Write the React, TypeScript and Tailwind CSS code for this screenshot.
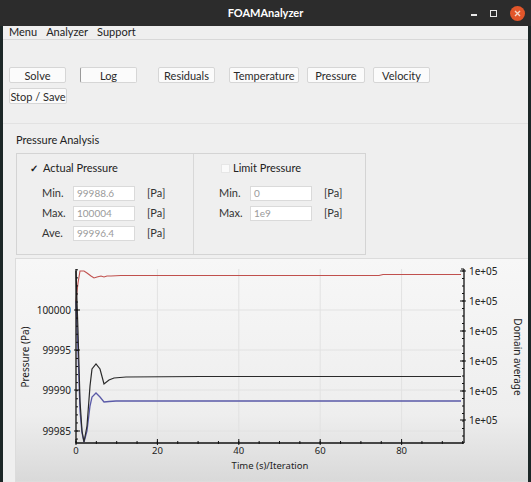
import React from "react";

const font = { fontFamily: '"Noto Sans", "DejaVu Sans", sans-serif' };
const uiFont = { fontFamily: 'Lato, "Noto Sans", sans-serif' };

function Btn({ label, className = "" }: { label: string; className?: string }) {
  return (
    <div
      className={`h-[16px] flex items-center justify-center bg-[#fbfbfb] border border-[#d6d6d6] rounded-[2px] text-[11px] text-[#2a2a2a] leading-none ${className}`}
    >
      {label}
    </div>
  );
}

function Field({ label, value }: { label: string; value: string }) {
  return (
    <div className="flex items-center h-[20px]">
      <span className="w-[31px] text-[11px] text-[#333]">{label}</span>
      <div className="w-[62px] h-[15px] bg-white border border-[#dadada] text-[10px] text-[#9a9a9a] flex items-center pl-[3px] leading-none">
        {value}
      </div>
      <span className="ml-[12px] text-[11px] text-[#333]">[Pa]</span>
    </div>
  );
}

function Chart() {
  const x0 = 75;
  const x1 = 463;
  const yTop = 268;
  const yBot = 442;
  const xs = (v: number) => x0 + v * 4.07;
  const minorX: number[] = [];
  for (let v = 0; v <= 95; v += 5) minorX.push(xs(v));
  const majorX = [0, 20, 40, 60, 80];
  const leftLabels = [
    { t: "100000", y: 309 },
    { t: "99995", y: 349 },
    { t: "99990", y: 389 },
    { t: "99985", y: 430 },
  ];
  const minorY: number[] = [];
  for (let y = 430 + 8.06; y > yTop; y -= 8.06) minorY.push(y);
  const rightMajor = [270, 300, 330, 360, 390, 419];
  const rightMinor: number[] = [];
  for (let y = 270; y < yBot; y += 7.5) rightMinor.push(y);

  const red =
    "75,300 77,282 79,270 83,270 86,272 90,275 93,277 96,276 100,275 103,276 106,275 110,275 120,274.5 140,274.5 378,274.5 382,273.5 460,273.5";
  const black =
    "75,270 77,330 79,400 81,430 83,441 86,425 89,385 91,368 95,363 99,368 103,383 108,379 113,377 125,376 200,375.5 460,375.5";
  const blue =
    "75,300 77,350 79,410 81,432 83,441 86,430 89,405 91,396 95,392 99,396 103,401 108,400.5 115,400 200,400 460,400";

  return (
    <svg
      className="block"
      width="513"
      height="222"
      viewBox="15 258 513 222"
      style={font}
    >
      <defs>
        <linearGradient id="bg" x1="0" y1="0" x2="0" y2="1">
          <stop offset="0" stopColor="#f7f7f7" />
          <stop offset="0.7" stopColor="#eeeeee" />
          <stop offset="1" stopColor="#d9d9d9" />
        </linearGradient>
      </defs>
      <rect x="15" y="258" width="513" height="222" fill="url(#bg)" />
      {majorX.slice(1).map((v) => (
        <line key={v} x1={xs(v)} x2={xs(v)} y1={yTop} y2={yBot} stroke="#e2e2e2" strokeWidth="1" />
      ))}
      {leftLabels.map((l) => (
        <line key={l.t} x1={x0} x2={x1} y1={l.y} y2={l.y} stroke="#e2e2e2" strokeWidth="1" />
      ))}
      <polyline points={red} fill="none" stroke="#c0504d" strokeWidth="1.1" />
      <polyline points={blue} fill="none" stroke="#5a5aa8" strokeWidth="1.3" />
      <polyline points={black} fill="none" stroke="#2a2a2a" strokeWidth="1.2" />
      <line x1={x0} x2={x0} y1={yTop} y2={yBot} stroke="#111" strokeWidth="1.3" />
      <line x1={x1} x2={x1} y1={yTop} y2={yBot} stroke="#111" strokeWidth="1.3" />
      <line x1={x0} x2={x1} y1={yBot} y2={yBot} stroke="#111" strokeWidth="1.3" />
      <line x1={x1 - 3} x2={x1} y1={yTop} y2={yTop} stroke="#111" strokeWidth="1" />
      {minorX.map((x, i) => (
        <line key={i} x1={x} x2={x} y1={yBot - 2} y2={yBot + 1} stroke="#111" strokeWidth="1" />
      ))}
      {majorX.map((v) => (
        <line key={v} x1={xs(v)} x2={xs(v)} y1={yBot - 4} y2={yBot + 2} stroke="#111" strokeWidth="1" />
      ))}
      {minorY.map((y, i) => (
        <line key={i} x1={x0} x2={x0 + 2} y1={y} y2={y} stroke="#111" strokeWidth="1" />
      ))}
      {leftLabels.map((l) => (
        <line key={l.t} x1={x0 - 2} x2={x0 + 4} y1={l.y} y2={l.y} stroke="#111" strokeWidth="1" />
      ))}
      {rightMinor.map((y, i) => (
        <line key={i} x1={x1 - 2} x2={x1} y1={y} y2={y} stroke="#111" strokeWidth="1" />
      ))}
      {rightMajor.map((y) => (
        <line key={y} x1={x1 - 4} x2={x1 + 2} y1={y} y2={y} stroke="#111" strokeWidth="1" />
      ))}
      {leftLabels.map((l) => (
        <text key={l.t} x={70} y={l.y + 3.5} textAnchor="end" fontSize="10" fill="#222">
          {l.t}
        </text>
      ))}
      {majorX.map((v) => (
        <text key={v} x={xs(v)} y={453} textAnchor="middle" fontSize="9.5" fill="#222">
          {v}
        </text>
      ))}
      {rightMajor.map((y) => (
        <text key={y} x={468} y={y + 3.5} fontSize="10" fill="#222">
          1e+05
        </text>
      ))}
      <text x={269} y={467.5} textAnchor="middle" fontSize="9.5" fill="#222">
        Time (s)/Iteration
      </text>
      <text
        x={0}
        y={0}
        transform="translate(28 356) rotate(-90)"
        textAnchor="middle"
        fontSize="10"
        fill="#222"
      >
        Pressure (Pa)
      </text>
      <text
        x={0}
        y={0}
        transform="translate(513 356) rotate(90)"
        textAnchor="middle"
        fontSize="10"
        fill="#222"
      >
        Domain average
      </text>
    </svg>
  );
}

export default function App() {
  return (
    <div className="w-[531px] h-[482px] bg-[#1c2727] flex flex-col overflow-hidden" style={uiFont}>
      {/* title bar */}
      <div className="h-[26px] bg-[#2c2c2c] relative flex items-center justify-center shrink-0">
        <span className="text-white text-[11px] font-bold">FOAMAnalyzer</span>
        <div className="absolute right-[6px] top-0 h-full flex items-center">
          <div className="w-[6px] h-[2px] bg-[#e8e8e8] mt-[4px]" />
          <div className="w-[7px] h-[7px] border border-[#e8e8e8] ml-[13px]" />
          <div className="w-[15px] h-[15px] rounded-full bg-[#e2562a] flex items-center justify-center ml-[13px]">
            <svg width="7" height="7" viewBox="0 0 7 7">
              <path d="M1 1 L6 6 M6 1 L1 6" stroke="#f6d8c8" strokeWidth="1.4" />
            </svg>
          </div>
        </div>
      </div>
      {/* body */}
      <div className="flex-1 mx-[3px] bg-[#efefef] flex flex-col">
        {/* menu */}
        <div className="h-[14px] flex items-center gap-[9px] px-[6px] text-[11px] text-[#222] border-b border-[#d8d8d8] shrink-0">
          <span>Menu</span>
          <span>Analyzer</span>
          <span>Support</span>
        </div>
        {/* buttons */}
        <div className="pt-[27px] pl-[6px] flex flex-col gap-[5px] h-[84px] border-b border-[#e2e2e2] shrink-0">
          <div className="flex">
            <Btn label="Solve" className="w-[57px]" />
            <Btn label="Log" className="w-[57px] ml-[14px] border-l-[#9a9a9a]" />
            <Btn label="Residuals" className="w-[57px] ml-[21px]" />
            <Btn label="Temperature" className="w-[70px] ml-[14px]" />
            <Btn label="Pressure" className="w-[58px] ml-[8px]" />
            <Btn label="Velocity" className="w-[57px] ml-[8px]" />
          </div>
          <Btn label="Stop / Save" className="w-[58px]" />
        </div>
        {/* pressure analysis */}
        <div className="pl-[13px] pt-[9px] shrink-0">
          <div className="text-[11px] text-[#222] h-[14px] leading-[14px]">Pressure Analysis</div>
          <div className="mt-[6px] w-[350px] h-[102px] border border-[#d4d4d4] flex">
            <div className="w-[177px] border-r border-[#d8d8d8] pl-[13px] pt-[7px]">
              <div className="flex items-center h-[14px] text-[11px] text-[#222]">
                <span className="text-[10px] font-bold mr-[5px]">✓</span>
                <span>Actual Pressure</span>
              </div>
              <div className="mt-[8px] pl-[12px]">
                <Field label="Min." value="99988.6" />
                <Field label="Max." value="100004" />
                <Field label="Ave." value="99996.4" />
              </div>
            </div>
            <div className="flex-1 pl-[27px] pt-[7px]">
              <div className="flex items-center h-[14px] text-[11px] text-[#222]">
                <div className="w-[9px] h-[9px] bg-[#fafafa] border border-[#e6e6e6] mr-[3px]" />
                <span>Limit Pressure</span>
              </div>
              <div className="mt-[8px] -ml-[2px]">
                <Field label="Min." value="0" />
                <Field label="Max." value="1e9" />
              </div>
            </div>
          </div>
        </div>
        {/* chart */}
        <div className="mt-[3px] ml-[12px] flex-1 border border-r-0 border-[#dcdcdc] overflow-hidden">
          <Chart />
        </div>
      </div>
    </div>
  );
}
